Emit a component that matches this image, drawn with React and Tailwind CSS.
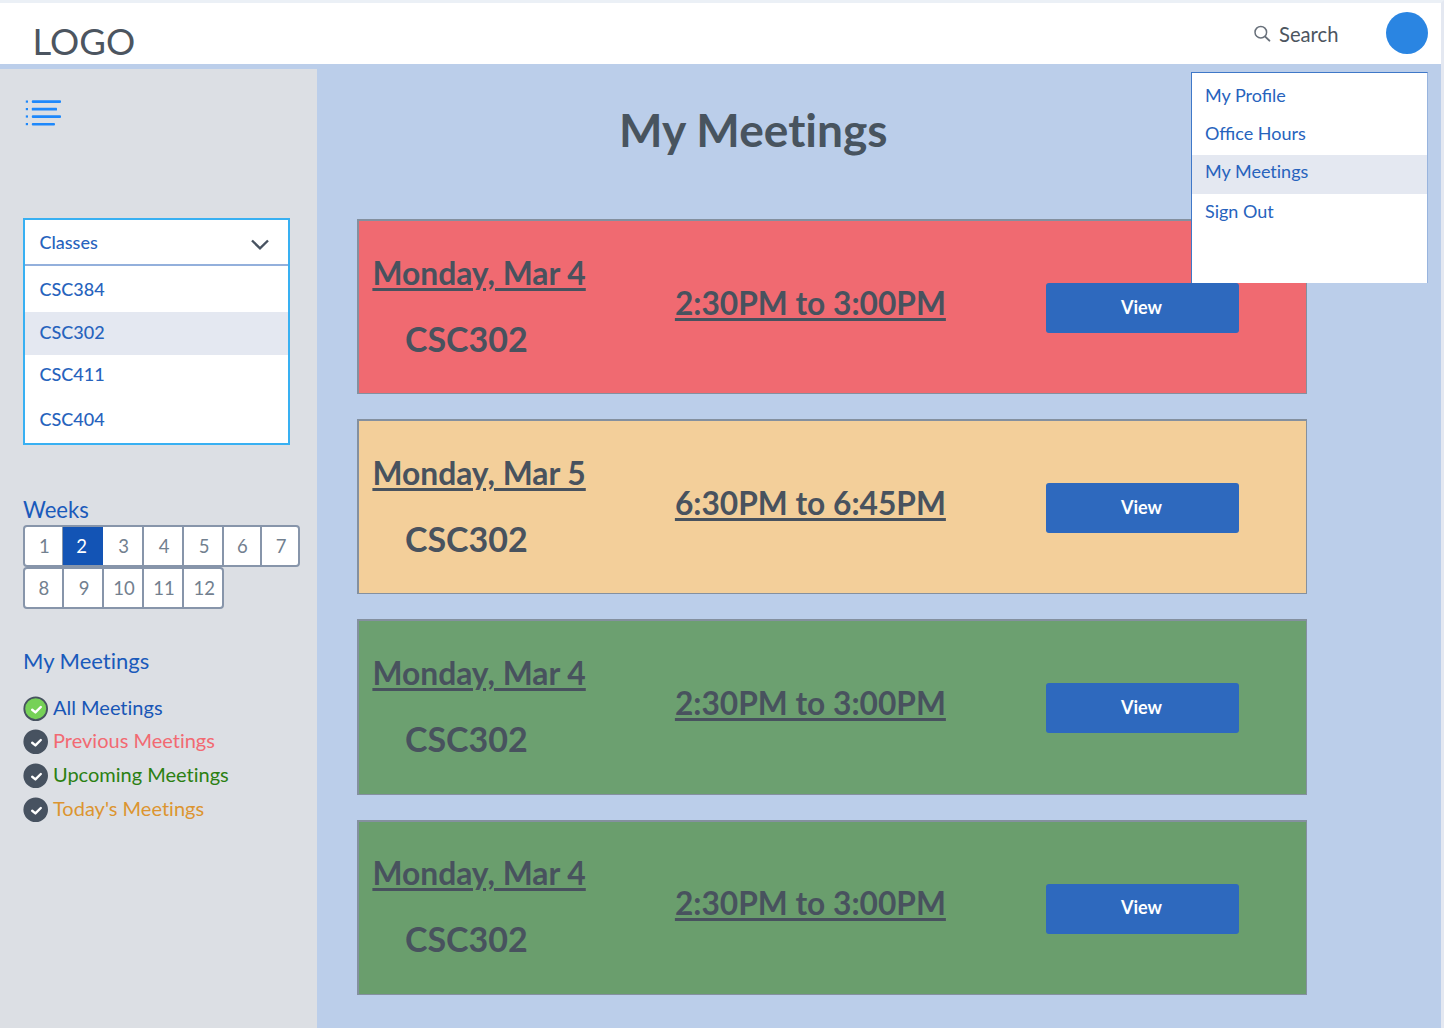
const classes = [
  { name: "CSC384", row: "h-[46px]" },
  { name: "CSC302", row: "h-[43px] bg-[#e4e8f1] pb-[2px]" },
  { name: "CSC411", row: "h-[43px] pb-[4px]" },
  { name: "CSC404", row: "h-[45px] pb-[2px]" },
];

const weekRows = [
  [
    [1, "w-[38.5px] pl-[2px]"],
    [2, "-ml-px w-[40px] pr-[3px] pl-[3px]"],
    [3, "w-[41px] pl-[3px]"],
    [4, "w-[40px] pl-[3px]"],
    [5, "w-[40px] pl-[3px]"],
    [6, "w-[38.5px] pl-[1px]"],
    [7, "w-[36px] pl-[2px]"],
  ],
  [
    [8, "w-[38.5px] pl-[1px]"],
    [9, "w-[40px] pl-[3px]"],
    [10, "w-[40px] pl-[3px]"],
    [11, "w-[40px] pl-[3px]"],
    [12, "w-[38.5px] pl-[3px]"],
  ],
];

const filters = [
  { label: "All Meetings", color: "text-[#1856b6]", fill: "#76d157", row: "h-[33px]" },
  { label: "Previous Meetings", color: "text-[#f26a72]", fill: "#475260", row: "h-[34px]" },
  { label: "Upcoming Meetings", color: "text-[#2b8012]", fill: "#475260", row: "h-[34px]" },
  { label: "Today's Meetings", color: "text-[#dc9530]", fill: "#475260", row: "h-[34px]" },
];

const menu = [
  { label: "My Profile", row: "h-[44px] pt-[1px] [font-variant-ligatures:normal]" },
  { label: "Office Hours", row: "h-[38px] pb-[5px] [font-variant-ligatures:normal]" },
  { label: "My Meetings", row: "h-[39px] bg-[#e4e8f1] pb-[6px]" },
  { label: "Sign Out", row: "h-[38px] pb-[3px]" },
];

const meetings = [
  { date: "Monday, Mar 4", time: "2:30PM to 3:00PM", bg: "bg-[#f06a71]" },
  { date: "Monday, Mar 5", time: "6:30PM to 6:45PM", bg: "bg-[#f3cf9a]" },
  { date: "Monday, Mar 4", time: "2:30PM to 3:00PM", bg: "bg-[#6ca070]" },
  { date: "Monday, Mar 4", time: "2:30PM to 3:00PM", bg: "bg-[#6a9e6d]" },
];

function ListIcon() {
  return (
    <svg width="38" height="28" viewBox="0 0 38 28" fill="#1e88fb" className="block">
      <rect x="0.8" y="1.5" width="2.2" height="2.2" />
      <rect x="0.8" y="9" width="2.2" height="2.2" />
      <rect x="0.8" y="16.4" width="2.2" height="2.2" />
      <rect x="0.8" y="24" width="2.2" height="2.2" />
      <rect x="6.8" y="1.3" width="29.2" height="2.7" rx="1" />
      <rect x="6.8" y="8.8" width="25.2" height="2.7" rx="0.6" />
      <rect x="6.8" y="16.2" width="29.2" height="2.7" rx="1" />
      <rect x="6.8" y="23.9" width="23.2" height="2.5" rx="1" />
    </svg>
  );
}

function CheckIcon({ fill }) {
  return (
    <svg width="26" height="26" viewBox="0 0 26 26" className="mt-px block shrink-0">
      <circle cx="12.7" cy="12.7" r="11.4" fill={fill} stroke="#475260" strokeWidth="1.8" />
      <path d="M9.2 13.8l3.2 2.6 5.4-5.4" fill="none" stroke="#fff" strokeWidth="2.4" strokeLinecap="round" strokeLinejoin="round" />
    </svg>
  );
}

function Header() {
  return (
    <header className="flex h-[61px] shrink-0 items-start bg-white text-[#4c5560]">
      <div className="ml-[32.5px] mt-[14px] text-[36.5px] leading-[48px]">LOGO</div>
      <div className="ml-auto flex h-[60px] items-center">
        <svg width="18" height="18" viewBox="0 0 18 18" fill="none" stroke="#68707a" className="mt-px block">
          <circle cx="6.8" cy="7.2" r="5.8" strokeWidth="1.5" />
          <path d="M11.2 11.6l4.2 4" strokeWidth="2" strokeLinecap="round" />
        </svg>
        <span className="ml-[7px] mt-[2px] w-[60px] whitespace-nowrap text-[20.2px] leading-6">Search</span>
        <div className="ml-[47px] mr-[13px] size-[42px] rounded-full bg-[#2a85e2]" />
      </div>
    </header>
  );
}

function Sidebar() {
  return (
    <aside className="mt-[5px] w-[317.4px] shrink-0 bg-[#dcdfe4] pl-[23px] pt-[30px]">
      <div className="pl-[2px]"><ListIcon /></div>
      <div className="mt-[91px] w-[267px] border-2 border-[#38b0f2] bg-white text-[18px] font-medium text-[#2763bd]">
        <div className="flex h-[46px] items-center justify-between border-b-2 border-[#93b0dc] pl-[14.5px] pr-[19px]">
          <span>Classes</span>
          <svg width="18" height="12" viewBox="0 0 18 12" fill="none" stroke="#475260" strokeWidth="2.4" className="mt-[5px] block">
            <path d="M1 1.5l8 7.8 8-7.8" />
          </svg>
        </div>
        {classes.map((c) => (
          <div key={c.name} className={`flex items-center pl-[14.5px] ${c.row}`}>{c.name}</div>
        ))}
      </div>
      <h2 className="mt-[50px] text-[22.1px] leading-[30px] text-[#1a5abb]">Weeks</h2>
      {weekRows.map((row, i) => (
        <div key={i} className="mb-[0.5px] flex h-[41.5px] w-fit overflow-hidden rounded-[4px] border-2 border-[#8795aa] bg-white">
          {row.map(([n, w]) => (
            <div
              key={n}
              className={`flex items-center justify-center border-r-2 pt-[2px] text-[18.5px] last:border-r-0 ${w} ${
                n === 2 ? "border-[#1354b5] bg-[#1354b5] text-white" : "border-[#8795aa] text-[#72808f]"
              }`}
            >
              {n}
            </div>
          ))}
        </div>
      ))}
      <h2 className="mt-[37px] text-[22px] leading-[30px] text-[#1a5abb]">My Meetings</h2>
      <div className="-ml-[0.5px] mt-[19px]">
        {filters.map((f) => (
          <div key={f.label} className={`flex items-start ${f.row}`}>
            <CheckIcon fill={f.fill} />
            <span className={`ml-[4.5px] text-[20px] leading-[24px] ${f.color}`}>{f.label}</span>
          </div>
        ))}
      </div>
    </aside>
  );
}

function MeetingCard({ date, time, bg }) {
  return (
    <article className={`flex h-[175.2px] w-[950px] border-2 border-b border-r border-[#84909f] text-[#48525e] font-bold ${bg}`}>
      <div className="w-[316px] pl-[13.5px] pt-[31.5px]">
        <div className="text-[31.8px] leading-[40px] underline decoration-[3px] underline-offset-[3px]">{date}</div>
        <div className="mt-[26px] pl-[32.5px] text-[34px] leading-[40px]">CSC302</div>
      </div>
      <div className="w-[371px] pt-[61.5px] text-[31.7px] leading-[40px]">
        <span className="underline decoration-[3px] underline-offset-[3px]">{time}</span>
      </div>
      <button className="mt-[62px] h-[50px] w-[193px] rounded-[3px] bg-[#2e69be] pb-[2px] pr-[2px] text-[18px] text-white">View</button>
    </article>
  );
}

function ProfileMenu() {
  return (
    <nav className="absolute left-[1191px] top-[72px] h-[211px] w-[236.5px] border border-b-0 border-[#3f78c8] border-r-[#98b4de] bg-white text-[18px] text-[#2763bd]">
      {menu.map((m) => (
        <div key={m.label} className={`flex items-center pl-[13px] ${m.row}`}>{m.label}</div>
      ))}
    </nav>
  );
}

export default function App() {
  return (
    <div className="relative flex h-[1028px] w-[1444px] flex-col overflow-hidden border-r-[3px] border-t-[3px] border-r-[#e4e8f1] border-t-[#ebf0f6] bg-[#bbceea] font-['Lato',sans-serif] [font-variant-ligatures:none]">
      <Header />
      <div className="flex min-h-0 flex-1">
        <Sidebar />
        <main className="flex-1 pl-[39.5px]">
          <h1 className="mt-[35px] pl-[262px] text-[46.1px] font-bold leading-[60px] text-[#48545f]">My Meetings</h1>
          <div className="mt-[60px] flex flex-col gap-[25px]">
            {meetings.map((m, i) => (
              <MeetingCard key={i} {...m} />
            ))}
          </div>
        </main>
      </div>
      <div className="absolute left-0 -top-[3px]">
        <ProfileMenu />
      </div>
    </div>
  );
}
